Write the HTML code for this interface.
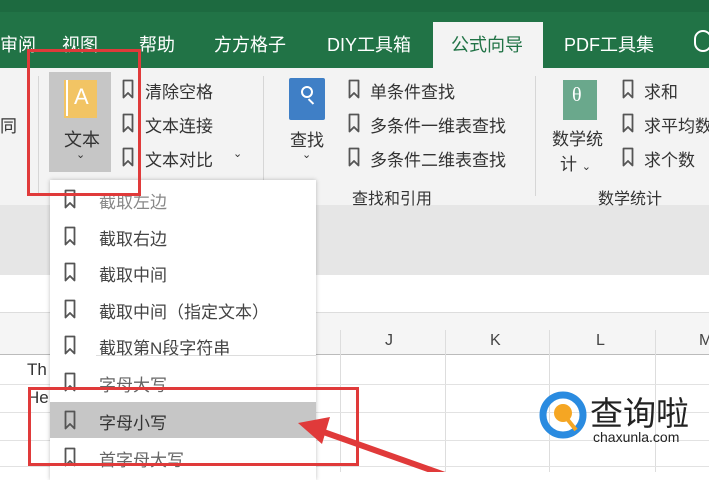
<!DOCTYPE html><html><head><meta charset="utf-8"><style>
*{margin:0;padding:0;box-sizing:border-box}
body{width:709px;height:472px;overflow:hidden;position:relative;background:#fff;font-family:"Liberation Sans","Noto Sans CJK SC",sans-serif;color:#333}
.a{position:absolute;white-space:nowrap}
.bm{position:absolute;width:12px;height:20px;background:url() no-repeat}
</style></head><body>
<svg width="0" height="0" style="position:absolute"><defs><symbol id="b" viewBox="0 0 12 20"><path d="M1.5 1.5 H10.5 V18.5 L6 14 L1.5 18.5 Z" fill="none" stroke="#555" stroke-width="1.8" stroke-linejoin="round"/></symbol></defs></svg>
<div class="a" style="left:0;top:0;width:709px;height:68px;background:#217346"></div>
<div class="a" style="left:0;top:0;width:709px;height:12px;background:#1d6a40"></div>
<div class="a" style="left:433px;top:22px;width:110px;height:50px;background:#f3f3f3"></div>
<div class="a" style="top:31px;left:0;font-size:18px;color:#fff">审阅</div>
<div class="a" style="top:31px;left:62px;font-size:18px;color:#fff">视图</div>
<div class="a" style="top:31px;left:139px;font-size:18px;color:#fff">帮助</div>
<div class="a" style="top:31px;left:214px;font-size:18px;color:#fff">方方格子</div>
<div class="a" style="top:31px;left:327px;font-size:18px;color:#fff">DIY工具箱</div>
<div class="a" style="top:31px;left:451px;font-size:18px;color:#217346">公式向导</div>
<div class="a" style="top:31px;left:564px;font-size:18px;color:#fff">PDF工具集</div>
<div class="a" style="top:30px;left:694px;width:18px;height:22px;border:2px solid #fff;border-radius:9px"></div>
<div class="a" style="left:0;top:68px;width:709px;height:142px;background:#f3f3f3"></div>
<div class="a" style="left:0;top:205px;width:709px;height:70px;background:#e6e6e6"></div>
<div class="a" style="left:0;top:275px;width:709px;height:37px;background:#fff"></div>
<div class="a" style="top:112px;left:0;font-size:17px">同</div>
<div class="a" style="left:38px;top:76px;width:1px;height:120px;background:#d6d6d6"></div>
<div class="a" style="left:49px;top:72px;width:62px;height:100px;background:#c6c6c6"></div>
<div class="a" style="left:64px;top:80px;width:33px;height:38px;background:#f2c464"></div>
<div class="a" style="left:66px;top:80px;width:2px;height:36px;background:#fff"></div>
<div class="a" style="left:74px;top:84px;font-size:22px;color:#fff">A</div>
<div class="a" style="left:64px;top:126px;font-size:18px">文本</div>
<div class="a" style="left:76px;top:148px;font-size:11px">⌄</div>
<svg class="a" style="left:122px;top:79px" width="12" height="20"><use href="#b"/></svg><div class="a" style="left:145px;top:78px;font-size:17px">清除空格</div>
<svg class="a" style="left:122px;top:113px" width="12" height="20"><use href="#b"/></svg><div class="a" style="left:145px;top:112px;font-size:17px">文本连接</div>
<svg class="a" style="left:122px;top:147px" width="12" height="20"><use href="#b"/></svg><div class="a" style="left:145px;top:146px;font-size:17px">文本对比</div>
<div class="a" style="left:233px;top:147px;font-size:11px">⌄</div>
<div class="a" style="left:263px;top:76px;width:1px;height:120px;background:#d6d6d6"></div>
<div class="a" style="left:289px;top:78px;width:36px;height:42px;background:#3f7fc6;border-radius:2px"></div>
<div class="a" style="left:301px;top:86px;width:12px;height:12px;border:2px solid #fff;border-radius:50%"></div>
<div class="a" style="left:310px;top:98px;width:2px;height:7px;background:#fff;transform:rotate(-45deg)"></div>
<div class="a" style="left:290px;top:126px;font-size:17px">查找</div>
<div class="a" style="left:302px;top:148px;font-size:11px">⌄</div>
<svg class="a" style="left:348px;top:79px" width="12" height="20"><use href="#b"/></svg><div class="a" style="left:370px;top:78px;font-size:17px">单条件查找</div>
<svg class="a" style="left:348px;top:113px" width="12" height="20"><use href="#b"/></svg><div class="a" style="left:370px;top:112px;font-size:17px">多条件一维表查找</div>
<svg class="a" style="left:348px;top:147px" width="12" height="20"><use href="#b"/></svg><div class="a" style="left:370px;top:146px;font-size:17px">多条件二维表查找</div>
<div class="a" style="left:352px;top:185px;font-size:16px">查找和引用</div>
<div class="a" style="left:535px;top:76px;width:1px;height:120px;background:#d6d6d6"></div>
<div class="a" style="left:563px;top:80px;width:34px;height:40px;background:#6aa88c"></div>
<div class="a" style="left:572px;top:84px;font-size:20px;color:#fff;font-family:'Liberation Serif',serif">θ</div>
<div class="a" style="left:552px;top:125px;font-size:17px">数学统</div>
<div class="a" style="left:560px;top:150px;font-size:17px">计 <span style="font-size:11px">⌄</span></div>
<svg class="a" style="left:622px;top:79px" width="12" height="20"><use href="#b"/></svg><div class="a" style="left:644px;top:78px;font-size:17px">求和</div>
<svg class="a" style="left:622px;top:113px" width="12" height="20"><use href="#b"/></svg><div class="a" style="left:644px;top:112px;font-size:17px">求平均数</div>
<svg class="a" style="left:622px;top:147px" width="12" height="20"><use href="#b"/></svg><div class="a" style="left:644px;top:146px;font-size:17px">求个数</div>
<div class="a" style="left:598px;top:185px;font-size:16px">数学统计</div>
<div class="a" style="left:0;top:312px;width:709px;height:43px;background:#f5f5f5;border-top:1px solid #ddd;border-bottom:1px solid #bbb"></div>
<div class="a" style="left:385px;top:332px;font-size:16px;color:#444">J</div>
<div class="a" style="left:490px;top:332px;font-size:16px;color:#444">K</div>
<div class="a" style="left:596px;top:332px;font-size:16px;color:#444">L</div>
<div class="a" style="left:699px;top:332px;font-size:16px;color:#444">M</div>
<div class="a" style="left:340px;top:330px;width:1px;height:142px;background:#ddd"></div>
<div class="a" style="left:445px;top:330px;width:1px;height:142px;background:#ddd"></div>
<div class="a" style="left:549px;top:330px;width:1px;height:142px;background:#ddd"></div>
<div class="a" style="left:655px;top:330px;width:1px;height:142px;background:#ddd"></div>
<div class="a" style="left:0;top:384px;width:709px;height:1px;background:#e2e2e2"></div>
<div class="a" style="left:0;top:412px;width:709px;height:1px;background:#e2e2e2"></div>
<div class="a" style="left:0;top:440px;width:709px;height:1px;background:#e2e2e2"></div>
<div class="a" style="left:0;top:466px;width:709px;height:1px;background:#e2e2e2"></div>
<div class="a" style="left:27px;top:360px;font-size:17px">Th</div>
<div class="a" style="left:27px;top:388px;font-size:17px">He</div>
<div class="a" style="left:50px;top:180px;width:266px;height:300px;background:#fff;box-shadow:0 0 4px rgba(0,0,0,.25)"></div>
<div class="a" style="left:50px;top:402px;width:266px;height:36px;background:#c6c6c6"></div>
<div class="a" style="left:96px;top:355px;width:220px;height:1px;background:#ddd"></div>
<svg class="a" style="left:64px;top:189px" width="12" height="20"><use href="#b"/></svg><div class="a" style="left:99px;top:188px;font-size:17px;color:#888">截取左边</div>
<svg class="a" style="left:64px;top:226px" width="12" height="20"><use href="#b"/></svg><div class="a" style="left:99px;top:225px;font-size:17px;color:#444">截取右边</div>
<svg class="a" style="left:64px;top:262px" width="12" height="20"><use href="#b"/></svg><div class="a" style="left:99px;top:261px;font-size:17px;color:#444">截取中间</div>
<svg class="a" style="left:64px;top:299px" width="12" height="20"><use href="#b"/></svg><div class="a" style="left:99px;top:298px;font-size:17px;color:#444">截取中间（指定文本）</div>
<svg class="a" style="left:64px;top:335px" width="12" height="20"><use href="#b"/></svg><div class="a" style="left:99px;top:334px;font-size:17px;color:#444">截取第N段字符串</div>
<svg class="a" style="left:64px;top:372px" width="12" height="20"><use href="#b"/></svg><div class="a" style="left:99px;top:371px;font-size:17px;color:#666">字母大写</div>
<svg class="a" style="left:64px;top:410px" width="12" height="20"><use href="#b"/></svg><div class="a" style="left:99px;top:409px;font-size:17px;color:#333">字母小写</div>
<svg class="a" style="left:64px;top:447px" width="12" height="20"><use href="#b"/></svg><div class="a" style="left:99px;top:446px;font-size:17px;color:#666">首字母大写</div>
<div class="a" style="left:27px;top:49px;width:114px;height:147px;border:3px solid #e03a3a"></div>
<div class="a" style="left:28px;top:387px;width:331px;height:79px;border:3px solid #e03a3a"></div>
<svg class="a" style="left:0;top:0" width="709" height="472"><line x1="445" y1="475" x2="318" y2="430" stroke="#e03a3a" stroke-width="6"/><polygon points="298,423 330,417 322,444" fill="#e03a3a"/>
<circle cx="563" cy="415" r="20" fill="none" stroke="#2a8be0" stroke-width="7"/><circle cx="563" cy="413" r="9" fill="#f5a623"/><line x1="568" y1="420" x2="576" y2="430" stroke="#f5a623" stroke-width="4"/></svg>
<div class="a" style="left:590px;top:387px;font-size:33px;color:#222">查询啦</div>
<div class="a" style="left:593px;top:429px;font-size:14px;color:#222">chaxunla.com</div>
</body></html>
